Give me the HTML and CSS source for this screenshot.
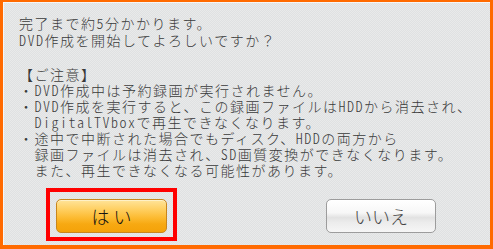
FILE: index.html
```html
<!DOCTYPE html>
<html lang="ja">
<head>
<meta charset="utf-8">
<link rel="stylesheet" href="styles.css">
</head>
<body>
<div class="dialog">
  <div class="message">
    <p class="lead">完了まで約5分かかります。<br>DVD作成を開始してよろしいですか<span class="fw">？</span></p>
    <div class="notes">
      <p class="notes-title">【ご注意】</p>
      <div class="note"><span class="bullet">・</span><span>DVD作成中は予約録画が実行されません。</span></div>
      <div class="note"><span class="bullet">・</span><span>DVD作成を実行すると、この録画ファイルはHDDから消去され、<br>DigitalTVboxで再生できなくなります。</span></div>
      <div class="note"><span class="bullet">・</span><span>途中で中断された場合でもディスク、HDDの両方から<br>録画ファイルは消去され、SD画質変換ができなくなります。<br>また、再生できなくなる可能性があります。</span></div>
    </div>
  </div>
  <div class="actions">
    <div class="focus-frame"><button class="btn btn-yes">は い</button></div>
    <button class="btn btn-no">いいえ</button>
  </div>
</div>
</body>
</html>
```
FILE: styles.css
```css
html, body {
  margin: 0;
  padding: 0;
}
body {
  width: 493px;
  height: 249px;
  overflow: hidden;
  font-family: "Noto Sans CJK JP", "Noto Sans", sans-serif;
}
.dialog {
  box-sizing: border-box;
  width: 493px;
  height: 249px;
  border-style: solid;
  border-color: #ff6a00;
  border-width: 2px 3px 4px 3px;
  background: repeating-conic-gradient(#e9eaea 0 25%, #dfe1e2 0 50%) 0 0 / 2px 2px;
  box-shadow: inset 1px 1px 0 #f6f6f6;
  padding: 13px 16px 0 16px;
  color: #3a3a3a;
  display: flex;
  flex-direction: column;
}
.message {
  font-size: 14px;
  font-weight: 300;
  letter-spacing: 1.5px;
  font-feature-settings: "hwid" 1;
}
.fw {
  font-feature-settings: "hwid" 0;
}
.message p {
  margin: 0;
}
.lead {
  line-height: 17px;
}
.notes {
  margin-top: 17px;
  line-height: 16px;
}
.note {
  display: flex;
}
.bullet {
  flex: 0 0 15px;
}
.actions {
  display: flex;
  align-items: flex-start;
  margin-top: 10px;
}
.focus-frame {
  margin-left: 27px;
  border: 4px solid #ff0000;
  padding: 7px 6px 4px 6px;
  display: flex;
}
.btn {
  box-sizing: border-box;
  width: 111px;
  height: 34px;
  border-radius: 5px;
  font-family: "Noto Sans CJK JP", sans-serif;
  font-size: 18px;
  font-weight: 300;
  line-height: 1;
  padding: 0;
  cursor: pointer;
}
.btn-yes {
  border: 1px solid #c9861c;
  color: #111;
  background: linear-gradient(to bottom, #ffe49a 0%, #ffcf60 30%, #fcbb32 55%, #f7a912 75%, #f5a208 100%);
  box-shadow: inset 0 1px 0 #fff1c6;
}
.btn-no {
  margin-top: 11px;
  margin-left: auto;
  margin-right: 38px;
  width: 110px;
  border: 1px solid #9c9c9c;
  color: #444;
  background: linear-gradient(to bottom, #ffffff 0%, #f7f7f7 40%, #e2e2e2 55%, #ececec 70%, #f6f6f6 100%);
  box-shadow: inset 0 1px 0 #ffffff;
}
```
